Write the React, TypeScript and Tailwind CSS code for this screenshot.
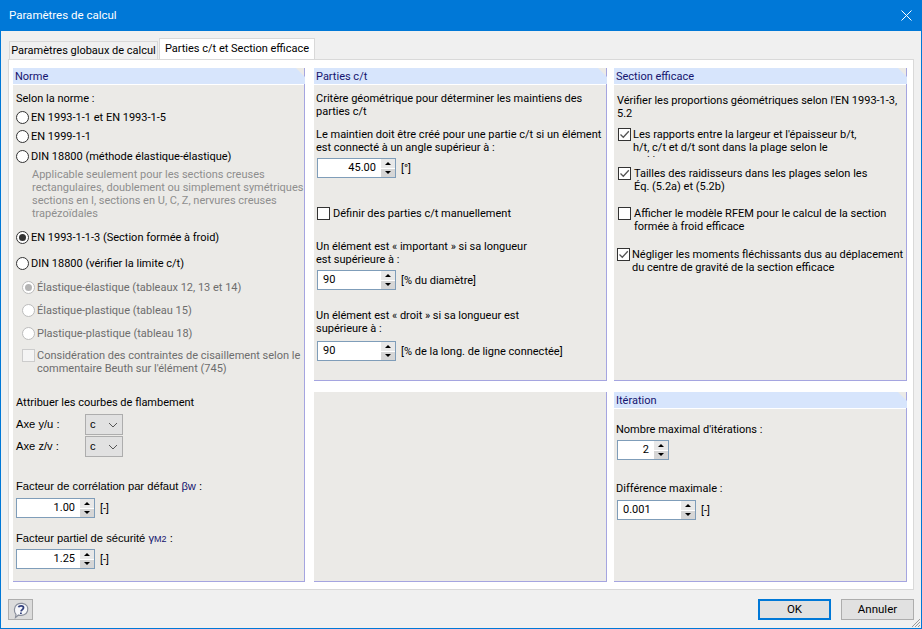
import React from 'react';

// Small native-looking controls
function Radio({ checked, disabled }: { checked?: boolean; disabled?: boolean }) {
  return (
    <span className={`flex h-[13px] w-[13px] shrink-0 items-center justify-center rounded-full border bg-white ${disabled ? 'border-[#bcbcbc]' : 'border-[#333333]'}`}>
      {checked && <span className={`h-[7px] w-[7px] rounded-full ${disabled ? 'bg-[#b4b4b4]' : 'bg-[#333333]'}`} />}
    </span>
  );
}

function Check({ checked, disabled }: { checked?: boolean; disabled?: boolean }) {
  return (
    <span className={`flex h-[13px] w-[13px] shrink-0 items-center justify-center border ${disabled ? 'border-[#cccccc] bg-[#f4f4f4]' : 'border-[#333333] bg-white'}`}>
      {checked && (
        <svg width="11" height="11" viewBox="0 0 11 11" fill="none">
          <path d="M1.5 5.5 L4.3 8.3 L9.8 2.2" stroke="#555555" strokeWidth="1.3" />
        </svg>
      )}
    </span>
  );
}

function Spin({ value, width = 'w-[79px]', left, unit }: { value: string; width?: string; left?: boolean; unit?: string }) {
  return (
    <div className="flex h-[20px] items-center">
      <div className={`flex h-[20px] ${width} items-stretch border border-[#7f9db9] bg-white`}>
        <span className={`flex-1 pt-[2px] text-black ${left ? 'pl-[5px] text-left' : 'pr-[5px] text-right'}`}>{value}</span>
        <span className="flex w-[14px] flex-col gap-px">
          <span className="flex flex-1 items-center justify-center bg-[#e8e8e8]">
            <span className="h-0 w-0 border-x-[3px] border-b-[3px] border-x-transparent border-b-black" />
          </span>
          <span className="flex flex-1 items-center justify-center bg-[#d6d6d6]">
            <span className="h-0 w-0 border-x-[3px] border-t-[3px] border-x-transparent border-t-black" />
          </span>
        </span>
      </div>
      {unit && <span className="ml-[5px] whitespace-nowrap">{unit}</span>}
    </div>
  );
}

function Combo() {
  return (
    <div className="flex h-[21px] w-[38px] items-center justify-between border border-[#adadad] bg-[#e1e1e1] pl-[4px] pr-[4px] text-black">
      <span>c</span>
      <svg width="10" height="6" viewBox="0 0 10 6" fill="none">
        <path d="M1 1 L5 5 L9 1" stroke="#555555" strokeWidth="1" />
      </svg>
    </div>
  );
}

function Panel({ title, className, children }: { title?: string; className: string; children?: React.ReactNode }) {
  return (
    <section className={`flex flex-col border-b border-r border-[#a5a5e0] bg-[#ebeae7] ${className}`}>
      {title ? (
        <div className="-mr-px h-[16px] shrink-0 bg-[#d7e5fc] pl-[2px] leading-[18px] text-[#14146e] [clip-path:polygon(0_0,calc(100%-9px)_0,100%_9px,100%_100%,0_100%)]">
          {title}
        </div>
      ) : null}
      {title ? <div className="h-px shrink-0 bg-white" /> : null}
      {children}
    </section>
  );
}

function Opt({ label, checked, className = '' }: { label: string; checked?: boolean; className?: string }) {
  return (
    <div className={`flex h-[16px] items-center gap-[2px] whitespace-nowrap ${className}`}>
      <Radio checked={checked} />
      <span>{label}</span>
    </div>
  );
}

function SubOpt({ label, checked, className = '' }: { label: string; checked?: boolean; className?: string }) {
  return (
    <div className={`ml-[6px] flex h-[16px] items-center gap-[2px] whitespace-nowrap text-[#6d6d6d] ${className}`}>
      <Radio checked={checked} disabled />
      <span>{label}</span>
    </div>
  );
}

export default function App() {
  return (
    <div className="flex h-[629px] w-[922px] flex-col overflow-hidden border border-t-0 border-[#0078d7] bg-[#f0f0f0] font-['Roboto',sans-serif] text-[11px] leading-[13px] text-black">
      {/* title bar */}
      <header className="-mx-px flex h-[31px] shrink-0 items-center justify-between bg-[#0078d7] pl-[9px] pr-[10px] text-[11.5px] text-white">
        <span>Paramètres de calcul</span>
        <svg width="11" height="11" viewBox="0 0 11 11" fill="none">
          <path d="M0.5 0.5 L10.5 10.5 M10.5 0.5 L0.5 10.5" stroke="#ffffff" strokeWidth="1" />
        </svg>
      </header>

      {/* tabs */}
      <div className="mt-[7px] flex h-[21px] items-end pl-[8px]">
        <div className="flex h-[18px] w-[149px] items-center justify-center border border-b-0 border-[#d9d9d9] bg-[#f0f0f0] whitespace-nowrap">
          Paramètres globaux de calcul
        </div>
        <div className="ml-px flex h-[21px] w-[156px] items-start justify-center border border-b-0 border-[#d9d9d9] bg-white pt-[3px] whitespace-nowrap">
          Parties c/t et Section efficace
        </div>
      </div>

      {/* tab page */}
      <main className="mx-[7px] flex h-[531px] border border-[#d9d9d9] bg-white pl-[4px] pr-[6px] pt-[8px]">
        <Panel title="Norme" className="h-[514px] w-[292px] shrink-0">
          <div className="flex flex-col pl-[3px]">
            <p className="mt-[7px] h-[13px]">Selon la norme :</p>
            <Opt className="mt-[4px]" label="EN 1993-1-1 et EN 1993-1-5" />
            <Opt className="mt-[3px]" label="EN 1999-1-1" />
            <Opt className="mt-[4px]" label="DIN 18800 (méthode élastique-élastique)" />
            <p className="ml-[16px] mt-[4px] whitespace-nowrap text-[#8e8e8e]">
              Applicable seulement pour les sections creuses<br />
              rectangulaires, doublement ou simplement symétriques<br />
              sections en I, sections en U, C, Z, nervures creuses<br />
              trapézoïdales
            </p>
            <Opt className="mt-[9px]" checked label="EN 1993-1-1-3 (Section formée à froid)" />
            <Opt className="mt-[10px]" label="DIN 18800 (vérifier la limite c/t)" />
            <SubOpt className="mt-[8px]" checked label="Élastique-élastique (tableaux 12, 13 et 14)" />
            <SubOpt className="mt-[7px]" label="Élastique-plastique (tableau 15)" />
            <SubOpt className="mt-[7px]" label="Plastique-plastique (tableau 18)" />
            <div className="ml-[6px] mt-[8px] flex gap-[2px] whitespace-nowrap text-[#6d6d6d]">
              <Check disabled />
              <span>Considération des contraintes de cisaillement selon le<br />commentaire Beuth sur l'élément (745)</span>
            </div>
            <p className="mt-[21px] h-[13px]">Attribuer les courbes de flambement</p>
            <div className="mt-[5px] flex items-center font-['Liberation_Sans',sans-serif] text-[11.2px]">
              <span className="w-[69px]">Axe y/u :</span>
              <Combo />
            </div>
            <div className="mt-px flex items-center font-['Liberation_Sans',sans-serif] text-[11.2px]">
              <span className="w-[69px]">Axe z/v :</span>
              <Combo />
            </div>
            <p className="mt-[23px] h-[13px] font-['Liberation_Sans',sans-serif] text-[11.2px]">
              Facteur de corrélation par défaut <span className="text-[#14146e]">βw</span> :
            </p>
            <div className="mt-[5px]"><Spin value="1.00" unit="[-]" /></div>
            <p className="mt-[14px] h-[13px] font-['Liberation_Sans',sans-serif] text-[11.2px]">
              Facteur partiel de sécurité <span className="text-[#14146e]">γ<span className="text-[9px]">M2</span></span> :
            </p>
            <div className="mt-[4px]"><Spin value="1.25" unit="[-]" /></div>
          </div>
        </Panel>

        <div className="ml-[9px] flex w-[293px] shrink-0 flex-col gap-[11px]">
          <Panel title="Parties c/t" className="h-[313px]">
            <div className="flex flex-col pl-[2px] whitespace-nowrap">
              <p className="mt-[7px]">Critère géométrique pour déterminer les maintiens des<br />parties c/t</p>
              <p className="mt-[10px]">Le maintien doit être créé pour une partie c/t si un élément<br />est connecté à un angle supérieur à :</p>
              <div className="ml-px mt-[4px]"><Spin value="45.00" unit="[°]" /></div>
              <div className="ml-px mt-[29px] flex items-center gap-[3px]">
                <Check />
                <span>Définir des parties c/t manuellement</span>
              </div>
              <p className="mt-[20px]">Un élément est « important » si sa longueur<br />est supérieure à :</p>
              <div className="ml-px mt-[4px]"><Spin value="90" left unit="[% du diamètre]" /></div>
              <p className="mt-[19px]">Un élément est « droit » si sa longueur est<br />supérieure à :</p>
              <div className="ml-px mt-[6px]"><Spin value="90" left unit="[% de la long. de ligne connectée]" /></div>
            </div>
          </Panel>
          <Panel className="h-[190px]" />
        </div>

        <div className="ml-[7px] flex w-[293px] shrink-0 flex-col gap-[11px]">
          <Panel title="Section efficace" className="h-[313px]">
            <div className="flex flex-col pl-[3px] whitespace-nowrap">
              <p className="mt-[9px]">Vérifier les proportions géométriques  selon l'EN 1993-1-3,<br />5.2</p>
              <div className="ml-px mt-[8px] flex h-[29px] gap-[2px] overflow-hidden">
                <Check checked />
                <span>Les rapports entre la largeur et l'épaisseur b/t,<br />h/t, c/t et d/t sont dans la plage selon le<br /><span className="ml-[14px]">i i</span></span>
              </div>
              <div className="ml-px mt-[10px] flex gap-[3px]">
                <Check checked />
                <span>Tailles des raidisseurs dans les plages selon les<br />Éq. (5.2a) et (5.2b)</span>
              </div>
              <div className="ml-px mt-[14px] flex gap-[3px]">
                <Check />
                <span>Afficher le modèle RFEM pour le calcul de la section<br />formée à froid efficace</span>
              </div>
              <div className="mt-[15px] flex gap-[2px]">
                <Check checked />
                <span>Négliger les moments fléchissants dus au déplacement<br />du centre de gravité de la section efficace</span>
              </div>
            </div>
          </Panel>
          <Panel title="Itération" className="h-[190px]">
            <div className="flex flex-col pl-[2px] whitespace-nowrap">
              <p className="mt-[14px]">Nombre maximal d'itérations :</p>
              <div className="ml-px mt-[4px]"><Spin value="2" width="w-[52px]" /></div>
              <p className="mt-[22px]">Différence maximale :</p>
              <div className="ml-px mt-[5px]"><Spin value="0.001" left unit="[-]" /></div>
            </div>
          </Panel>
        </div>
      </main>

      {/* footer */}
      <footer className="relative flex flex-1 items-start justify-between pl-[7px] pr-[7px] pt-[9px]">
        <button className="flex h-[21px] w-[25px] items-center justify-center border border-[#adadad] bg-[#dcdcdc]">
          <svg width="18" height="18" viewBox="0 0 18 18">
            <path d="M4 13.5 C1.5 11 2 5.5 5 3.5 C8 1.5 13 2 15 5 C17 8 15.5 12.5 12 13.8 C9.5 14.7 7.5 14.2 6.5 14 L3.5 16.5 Z" fill="#f6f7fa" stroke="#8a8f9c" strokeWidth="1.2" />
            <path d="M6.5 6.3 C7 4.5 11.5 4.2 11.5 6.7 C11.5 8.5 9.2 8.6 9 10.4 M8.9 11.6 V13" fill="none" stroke="#33417e" strokeWidth="1.8" />
          </svg>
        </button>
        <div className="flex gap-[10px] text-[11.5px] text-black">
          <button className="h-[21px] w-[73px] border-2 border-[#0078d7] bg-[#e1e1e1]">OK</button>
          <button className="h-[21px] w-[73px] border border-[#adadad] bg-[#e1e1e1]">Annuler</button>
        </div>
        <svg className="absolute bottom-0 right-0" width="11" height="11" viewBox="0 0 11 11" fill="none">
          <path d="M10 2 L2 10 M10 5 L5 10 M10 8 L8 10" stroke="#9a9a9a" strokeWidth="1" />
        </svg>
      </footer>
    </div>
  );
}
